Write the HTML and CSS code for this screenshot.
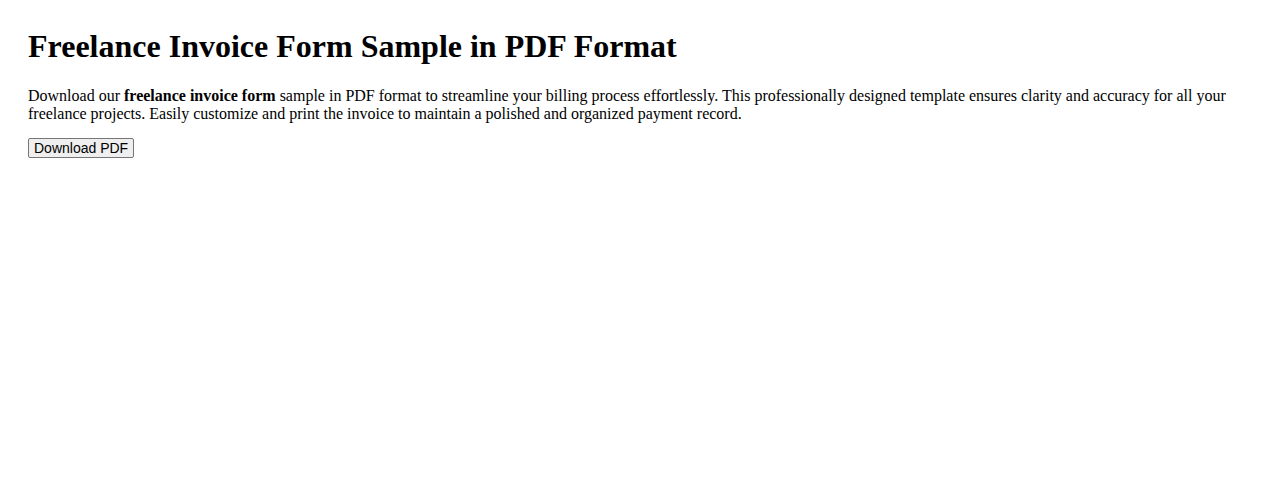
FILE: index.html
```html
<!DOCTYPE html>
<html lang="en">
<head>
  <meta charset="UTF-8">
  <meta name="viewport" content="width=device-width, initial-scale=1.0">
  <title>Freelance Invoice Form Sample in PDF Format</title>
  <link rel="stylesheet" href="styles.css">
</head>
<body>
  <h1 class="page-title">Freelance Invoice Form Sample in PDF Format</h1>
  <p class="intro">Download our <strong>freelance invoice form</strong> sample in PDF format to streamline your billing process effortlessly. This professionally designed template ensures clarity and accuracy for all your freelance projects. Easily customize and print the invoice to maintain a polished and organized payment record.</p>
  <button class="download-btn" type="button">Download PDF</button>
</body>
</html>
```

FILE: styles.css
```css
body {
  font-family: "Liberation Serif", "Times New Roman", serif;
  margin: 8px;
  padding: 20px;
  color: #000000;
  background-color: #ffffff;
}

.page-title {
  font-size: 32px;
  margin: 0 0 22px;
}

.intro {
  font-size: 16px;
  margin: 16px 0 15px;
}

.download-btn {
  font-family: "Liberation Sans", Arial, sans-serif;
  font-size: 14px;
  padding: 1px 5px;
  color: #000000;
  background-color: #efefef;
  border: 1px solid #767676;
  border-radius: 2px;
}
```
